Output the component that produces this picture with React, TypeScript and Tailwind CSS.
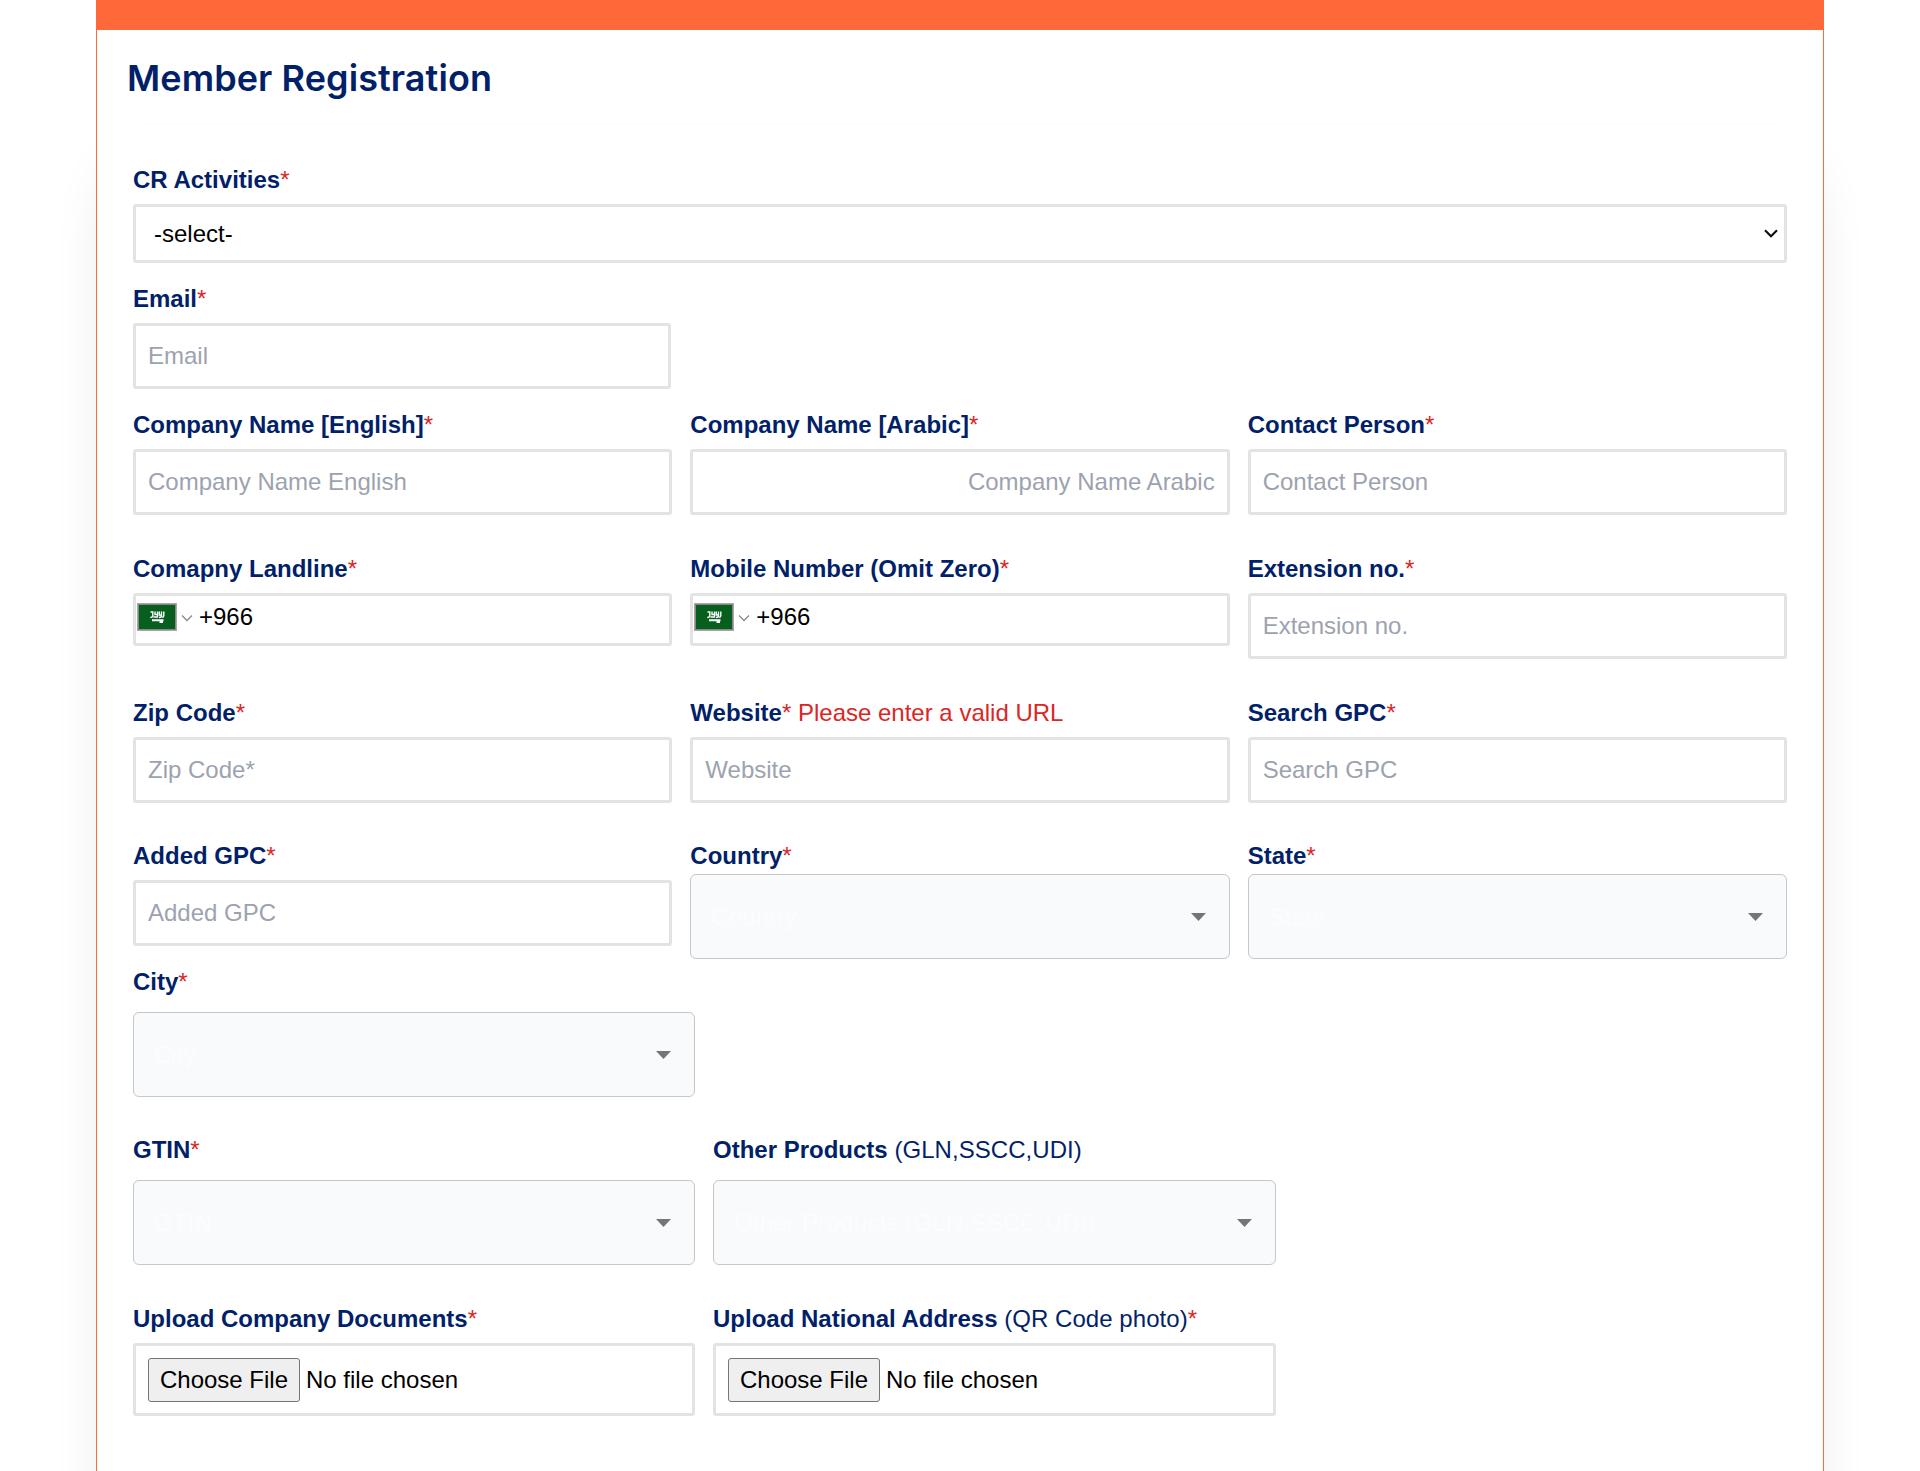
import type { ReactNode } from "react";

function Label({ children, note, error, optional }: { children: ReactNode; note?: string; error?: string; optional?: boolean }) {
  return (
    <div className="h-9 whitespace-nowrap text-[24px] leading-9 text-[#021F69]">
      <span className="font-bold">{children}</span>
      {note && <span className="tracking-[0.05px]"> {note}</span>}
      {!optional && <span className="text-[#dc2626]">*</span>}
      {error && <span className="text-[#dc2626]"> {error}</span>}
    </div>
  );
}

function Field({ label, placeholder, error, right }: { label: string; placeholder: string; error?: string; right?: boolean }) {
  return (
    <div>
      <Label error={error}>{label}</Label>
      <input
        placeholder={placeholder}
        className={`mt-1.5 block h-[66px] w-full rounded-[3px] border-[3px] border-[#e3e3e3] bg-white px-3 text-[24px] text-black placeholder:text-[#9ca3af] ${right ? "text-right" : "text-left"}`}
      />
    </div>
  );
}

function Flag() {
  return (
    <svg width="40" height="28" viewBox="0 0 40 28" className="block">
      <rect width="40" height="28" fill="#a9a6a9" />
      <rect x="1" y="1" width="38" height="26" fill="#8b858b" />
      <rect x="2" y="2" width="36" height="24" fill="#065f1c" />
      <g stroke="#fff" fill="none">
        <path d="M13.500 9h3M15.800 9v3.500q0 2-2.500 2M18 8.500v3h2.500v-3M20.500 11.500v2.500h-4M22.300 8.500v3.500h2.200v-3.500M24.500 11v2q0 1.500-2.500 1.500M26.800 8.500v4q0 1.500-1.500 2" strokeWidth="1.400" />
        <path d="M15 17.200h11.500M22.500 19h3.500" strokeWidth="1.900" />
      </g>
    </svg>
  );
}

function Phone({ label }: { label: string }) {
  return (
    <div>
      <Label>{label}</Label>
      <div className="mt-1.5 flex h-[53px] items-start rounded-[3px] border-[3px] border-[#e3e3e3] bg-white pl-px pt-[7px] text-[24px] text-black">
        <Flag />
        <svg width="12" height="28" viewBox="0 0 12 28" className="ml-1 block" fill="none" stroke="#8a8a8a" strokeWidth="1.3">
          <path d="M1 12.500L6 17.500L11 12.500" />
        </svg>
        <span className="ml-1.5 leading-[27px]">+966</span>
      </div>
    </div>
  );
}

function Dropdown({ text }: { text: string }) {
  return (
    <div className="flex h-[85px] items-center justify-between rounded-[6px] border border-[#c6c7c9] bg-[#f9fafc] pl-[20px] pr-[23px] text-[24px] tracking-[0.225px] text-[#fcfdfd]">
      <span>{text}</span>
      <svg width="15" height="8" viewBox="0 0 15 8">
        <path d="M0 0h15L7.500 8z" fill="#757575" />
      </svg>
    </div>
  );
}

function Upload() {
  return (
    <div className="mt-1.5 flex h-[73px] items-center rounded-[3px] border-[3px] border-[#e3e3e3] bg-white px-3 text-[24px] text-black">
      <button className="h-11 w-[152px] rounded-[3px] border border-[#767676] bg-[#efefef] text-center leading-[40px]">Choose File</button>
      <span className="ml-[6px] leading-[40px]">No file chosen</span>
    </div>
  );
}

export default function App() {
  return (
    <div className="h-[1471px] overflow-hidden bg-white font-['Liberation_Sans',Arial,sans-serif]">
      <div className="mx-24 h-[1600px] border-x border-[#ff693a] shadow-[0_150px_64px_-34px_rgba(0,0,0,0.24)]">
        <div className="h-full bg-white">
          <div className="h-[30px] bg-[#ff693a]" />
          <h1 className="ml-[30px] h-[94px] pt-[21px] font-[Inter] text-[36px] font-semibold leading-[54px] tracking-[0.08px] text-[#021F69]">
            Member Registration
          </h1>
          <div className="mx-[46px] mb-[37px] h-px bg-[#fcfcfc]" />
          <div className="mx-9">
            <Label>CR Activities</Label>
            <div className="mt-1.5 flex h-[59px] items-center justify-between rounded-[3px] border-[3px] border-[#e3e3e3] bg-white pl-[18px] pr-1.5 text-[24px] text-black">
              <span>-select-</span>
              <svg width="14" height="9" viewBox="0 0 14 9" fill="none" stroke="#111" strokeWidth="2.200">
                <path d="M1 1.200L7 7.200L13 1.200" />
              </svg>
            </div>
            <div className="mt-[18px] w-[538px]">
              <Field label="Email" placeholder="Email" />
            </div>
            <div className="mt-[18px] grid grid-cols-3 gap-x-[18px]">
              <Field label="Company Name [English]" placeholder="Company Name English" />
              <Field label="Company Name [Arabic]" placeholder="Company Name Arabic" right />
              <Field label="Contact Person" placeholder="Contact Person" />
            </div>
            <div className="mt-9 grid grid-cols-3 gap-x-[18px]">
              <Phone label="Comapny Landline" />
              <Phone label="Mobile Number (Omit Zero)" />
              <Field label="Extension no." placeholder="Extension no." />
            </div>
            <div className="mt-9 grid grid-cols-3 gap-x-[18px]">
              <Field label="Zip Code" placeholder="Zip Code*" />
              <Field label="Website" placeholder="Website" error="Please enter a valid URL" />
              <Field label="Search GPC" placeholder="Search GPC" />
            </div>
            <div className="mt-[35px] grid h-[120px] grid-cols-3 gap-x-[18px]">
              <Field label="Added GPC" placeholder="Added GPC" />
              <div>
                <Label>Country</Label>
                <Dropdown text="Country" />
              </div>
              <div>
                <Label>State</Label>
                <Dropdown text="State" />
              </div>
            </div>
            <div className="mt-1.5 w-[562px]">
              <Label>City</Label>
              <div className="mt-3">
                <Dropdown text="City" />
              </div>
            </div>
            <div className="mt-[35px] grid grid-cols-[562px_563px] gap-x-[18px]">
              <div>
                <Label>GTIN</Label>
                <div className="mt-3">
                  <Dropdown text="GTIN" />
                </div>
              </div>
              <div>
                <Label note="(GLN,SSCC,UDI)" optional>Other Products</Label>
                <div className="mt-3">
                  <Dropdown text="Other Products (GLN,SSCC,UDI)" />
                </div>
              </div>
            </div>
            <div className="mt-9 grid grid-cols-[562px_563px] gap-x-[18px]">
              <div>
                <Label>Upload Company Documents</Label>
                <Upload />
              </div>
              <div>
                <Label note="(QR Code photo)">Upload National Address</Label>
                <Upload />
              </div>
            </div>
          </div>
        </div>
      </div>
    </div>
  );
}
